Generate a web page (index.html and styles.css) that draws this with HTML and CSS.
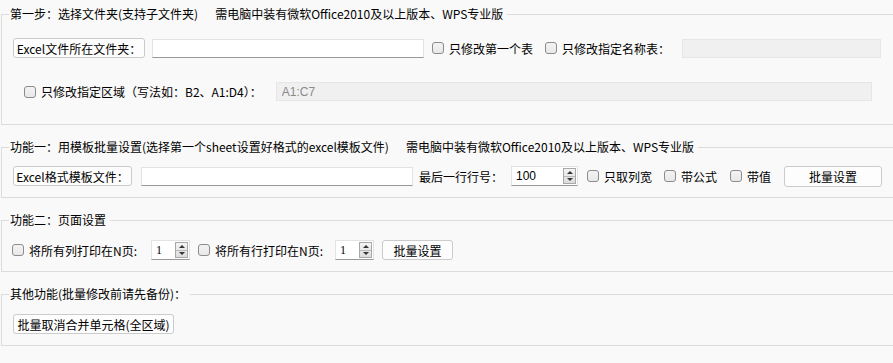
FILE: index.html
```html
<!DOCTYPE html>
<html lang="zh-CN">
<head>
  <meta charset="UTF-8">
  <title>Excel批量设置</title>
  <link rel="stylesheet" href="styles.css">
</head>
<body>
  <!-- 第一步 -->
  <fieldset class="group group-step">
    <legend>第一步：选择文件夹(支持子文件夹)<span class="note">需电脑中装有微软Office2010及以上版本、WPS专业版</span></legend>
    <div class="row">
      <button class="btn btn-folder">Excel文件所在文件夹：</button>
      <input class="text text-path" type="text">
      <label class="check check-first"><input type="checkbox"><span>只修改第一个表</span></label>
      <label class="check check-named"><input type="checkbox"><span>只修改指定名称表：</span></label>
      <input class="text text-disabled text-sheet" type="text" disabled>
    </div>
    <div class="row row-range">
      <label class="check"><input type="checkbox"><span>只修改指定区域（写法如：B2、A1:D4）：</span></label>
      <input class="text text-disabled text-range" type="text" value="A1:C7" disabled>
    </div>
  </fieldset>

  <!-- 功能一 -->
  <fieldset class="group group-one">
    <legend>功能一：用模板批量设置(选择第一个sheet设置好格式的excel模板文件)<span class="note">需电脑中装有微软Office2010及以上版本、WPS专业版</span></legend>
    <div class="row">
      <button class="btn btn-template">Excel格式模板文件：</button>
      <input class="text text-path text-template" type="text">
      <span class="label label-last">最后一行行号：</span>
      <div class="spin spin-wide">
        <input type="text" value="100">
        <div class="spin-btns"><i class="up"></i><i class="down"></i></div>
      </div>
      <label class="check check-width"><input type="checkbox"><span>只取列宽</span></label>
      <label class="check check-formula"><input type="checkbox"><span>带公式</span></label>
      <label class="check check-value"><input type="checkbox"><span>带值</span></label>
      <button class="btn btn-apply">批量设置</button>
    </div>
  </fieldset>

  <!-- 功能二 -->
  <fieldset class="group group-two">
    <legend>功能二：页面设置</legend>
    <div class="row row-page">
      <label class="check check-cols"><input type="checkbox"><span>将所有列打印在N页:</span></label>
      <div class="spin spin-small">
        <input type="text" value="1">
        <div class="spin-btns"><i class="up"></i><i class="down"></i></div>
      </div>
      <label class="check check-rows"><input type="checkbox"><span>将所有行打印在N页:</span></label>
      <div class="spin spin-small">
        <input type="text" value="1">
        <div class="spin-btns"><i class="up"></i><i class="down"></i></div>
      </div>
      <button class="btn btn-page">批量设置</button>
    </div>
  </fieldset>

  <!-- 其他功能 -->
  <fieldset class="group group-other">
    <legend>其他功能(批量修改前请先备份)：</legend>
    <div class="row">
      <button class="btn btn-unmerge">批量取消合并单元格(全区域)</button>
    </div>
  </fieldset>
</body>
</html>
```

FILE: styles.css
```css
/* Reset */
* {
  margin: 0;
  padding: 0;
  box-sizing: border-box;
}

body {
  font-family: "Noto Sans CJK SC", "Liberation Sans", sans-serif;
  font-size: 12px;
  color: #000;
  background-color: #f9f9f9;
  width: 893px;
  height: 363px;
  overflow: hidden;
}

/* Group boxes */
.group {
  border: 1px solid #dcdcdc;
  margin: 14px -20px 0 1px;
  padding: 0 0 0 11px;
}

.group legend {
  line-height: 16px;
  height: 16px;
  margin-left: -4px;
  padding: 0 4px 0 1px;
}

.group legend .note {
  margin-left: 17px;
}

.group-step {
  margin-top: 6px;
  padding-top: 16px;
  padding-bottom: 23px;
}

.group-one {
  padding-top: 11px;
  padding-bottom: 11px;
}

.group-two {
  padding-top: 12px;
  padding-bottom: 11px;
}

.group-other {
  padding-top: 12px;
  padding-bottom: 11px;
}

/* Rows */
.row {
  display: flex;
  align-items: center;
  height: 20px;
}

.row-range {
  margin-top: 24px;
  padding-left: 11px;
  height: 19px;
}

.row-page {
  margin-left: -1px;
}

/* Buttons */
.btn {
  font-family: inherit;
  font-size: 12px;
  height: 20px;
  background: #fdfdfd;
  border: 1px solid #cbcbcb;
  border-radius: 3px;
  color: #000;
  text-align: center;
}

.btn-folder { width: 132px; }
.btn-template { width: 119px; }
.btn-apply { width: 98px; height: 21px; margin-left: 13px; }
.btn-page { width: 71px; margin-left: 8px; }
.btn-unmerge { width: 161px; }

/* Text inputs */
.text {
  height: 19px;
  border: 1px solid #e3e3e3;
  border-bottom-color: #9a9a9a;
  background: #fff;
  font-family: "Liberation Sans", sans-serif;
  font-size: 12px;
  padding: 0 5px;
}

.text-path {
  width: 272px;
  margin-left: 7px;
}

.text-template {
  margin-left: 9px;
}

.text-disabled {
  background: #f0f0f0;
  border-color: #e6e6e6;
  color: #8a8a8a;
}

.text-sheet {
  width: 199px;
  margin-left: 12px;
}

.text-range {
  width: 596px;
  margin-left: 14px;
}

/* Checkboxes */
.check {
  display: flex;
  align-items: center;
  white-space: nowrap;
}

.check input {
  appearance: none;
  width: 12px;
  height: 12px;
  border: 1px solid #8c8c8c;
  border-radius: 3px;
  background: linear-gradient(#f3f3f3, #e8e8e8);
  margin-right: 5px;
}

.check-first { margin-left: 8px; }
.check-named { margin-left: 12px; }
.check-width { margin-left: 9px; }
.check-formula { margin-left: 12px; }
.check-value { margin-left: 13px; }
.check-cols span { margin-right: 14px; }
.check-rows { margin-left: 8px; }
.check-rows span { margin-right: 12px; }

.label-last {
  margin-left: 6px;
  margin-right: 8px;
}

/* Spin boxes */
.spin {
  display: flex;
  align-items: center;
  height: 20px;
  background: #fff;
  border: 1px solid #e3e3e3;
  border-bottom-color: #9a9a9a;
  padding-right: 1px;
}

.spin input {
  flex: 1;
  min-width: 0;
  border: none;
  background: transparent;
  font-family: "Liberation Sans", sans-serif;
  font-size: 12px;
  padding-left: 4px;
}

.spin-small input {
  font-family: "Liberation Serif", serif;
}

.spin-wide { width: 67px; }
.spin-small { width: 39px; }

.spin-btns {
  width: 13px;
  height: 16px;
  border: 1px solid #a8a8a8;
  background: linear-gradient(#f4f4f4, #dcdcdc);
  display: flex;
  flex-direction: column;
}

.spin-btns i {
  flex: 1;
  display: flex;
  align-items: center;
  justify-content: center;
}

.spin-btns .up {
  border-bottom: 1px solid #b8b8b8;
}

.spin-btns .up::before {
  content: "";
  border-left: 3px solid transparent;
  border-right: 3px solid transparent;
  border-bottom: 3px solid #333;
}

.spin-btns .down::before {
  content: "";
  border-left: 3px solid transparent;
  border-right: 3px solid transparent;
  border-top: 3px solid #333;
}
```
